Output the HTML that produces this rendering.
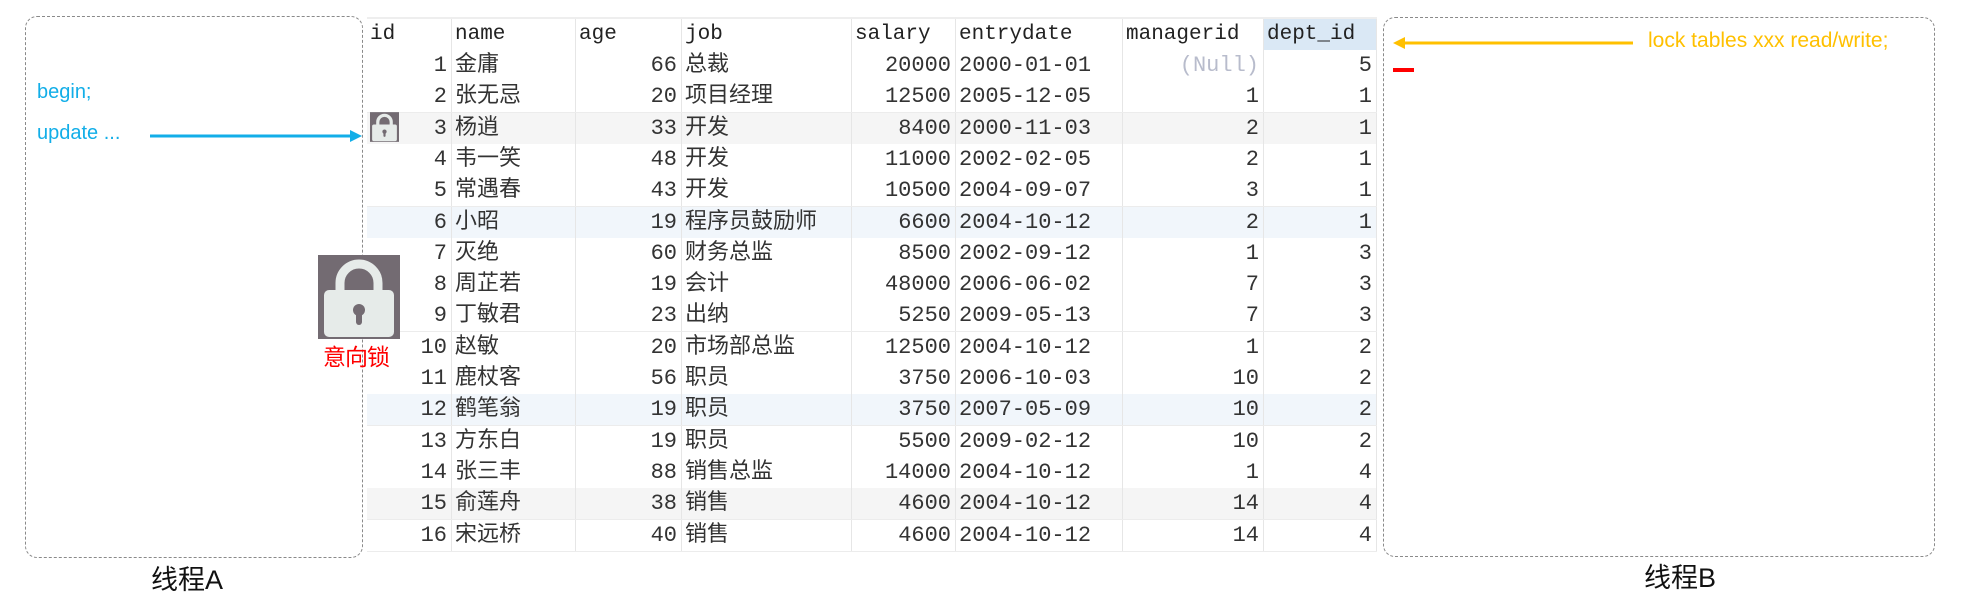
<!DOCTYPE html>
<html><head><meta charset="utf-8"><style>
body{margin:0;width:1971px;height:612px;background:#fff;position:relative;overflow:hidden;font-family:"Liberation Sans","Noto Sans CJK SC",sans-serif}
.abs{position:absolute}
.box{position:absolute;border:1.5px dashed #8a8a8a;border-radius:12px}
.tbl{position:absolute;left:367px;top:17px;width:1010px;height:533px;background:#fff;border-top:2px solid #eee}
.row{position:absolute;left:0;width:1010px;height:31px;border-bottom:1px solid #ececec}
.c{position:absolute;top:0;height:31px;line-height:31px;font-family:"Liberation Mono","Noto Sans CJK SC",monospace;font-size:22px;color:#333;white-space:nowrap;box-sizing:border-box;border-right:1px solid #e6e6e6}
.r{text-align:right;padding-right:4px}
.l{text-align:left;padding-left:3px}
.h .c{color:#222;font-size:21px}
</style></head><body>

<div class="box" style="left:25px;top:16px;width:336px;height:540px"></div>
<div class="box" style="left:1383px;top:17px;width:550px;height:538px"></div>

<div class="abs" style="left:37px;top:81px;color:#12aee8;font-size:20px">begin;</div>
<div class="abs" style="left:37px;top:122px;color:#12aee8;font-size:20px">update ...</div>
<svg class="abs" style="left:148px;top:128px" width="216" height="16"><line x1="2" y1="8" x2="204" y2="8" stroke="#12aee8" stroke-width="3"/><polygon points="202,2 214,8 202,14" fill="#12aee8"/></svg>

<div class="abs" style="left:1648px;top:29px;color:#ffc000;font-size:21px">lock tables xxx read/write;</div>
<svg class="abs" style="left:1393px;top:35px" width="242" height="16"><line x1="10" y1="8" x2="240" y2="8" stroke="#ffc000" stroke-width="3"/><polygon points="12,2 0,8 12,14" fill="#ffc000"/></svg>
<div class="abs" style="left:1393px;top:68px;width:21px;height:4px;background:#f00"></div>

<div class="abs" style="left:151px;top:558px;font-size:27px;color:#111">线程A</div>
<div class="abs" style="left:1644px;top:556px;font-size:27px;color:#111">线程B</div>

<div class="tbl" id="t"></div>

<svg class="abs" style="left:318px;top:255px" width="82" height="84" viewBox="0 0 82 84"><rect width="82" height="84" fill="#736b72"/><path d="M22 38 V28 A19 19 0 0 1 60 28 V38" fill="none" stroke="#e6ebe9" stroke-width="9"/><rect x="6" y="35" width="70" height="47" rx="5" fill="#e6ebe9"/><circle cx="41" cy="55" r="6" fill="#736b72"/><rect x="38" y="55" width="6" height="15" rx="3" fill="#736b72"/></svg>
<div class="abs" style="left:323px;top:338px;font-size:23px;color:#f00;letter-spacing:-1px">意向锁</div>

<script>
var cols=[[0,85,'r'],[85,124,'l'],[209,106,'r'],[315,170,'l'],[485,104,'r'],[589,167,'l'],[756,141,'r'],[897,113,'r']];
var head=['id','name','age','job','salary','entrydate','managerid','dept_id'];
var d=[
[1,'金庸',66,'总裁',20000,'2000-01-01',null,5],
[2,'张无忌',20,'项目经理',12500,'2005-12-05',1,1],
[3,'杨逍',33,'开发',8400,'2000-11-03',2,1],
[4,'韦一笑',48,'开发',11000,'2002-02-05',2,1],
[5,'常遇春',43,'开发',10500,'2004-09-07',3,1],
[6,'小昭',19,'程序员鼓励师',6600,'2004-10-12',2,1],
[7,'灭绝',60,'财务总监',8500,'2002-09-12',1,3],
[8,'周芷若',19,'会计',48000,'2006-06-02',7,3],
[9,'丁敏君',23,'出纳',5250,'2009-05-13',7,3],
[10,'赵敏',20,'市场部总监',12500,'2004-10-12',1,2],
[11,'鹿杖客',56,'职员',3750,'2006-10-03',10,2],
[12,'鹤笔翁',19,'职员',3750,'2007-05-09',10,2],
[13,'方东白',19,'职员',5500,'2009-02-12',10,2],
[14,'张三丰',88,'销售总监',14000,'2004-10-12',1,4],
[15,'俞莲舟',38,'销售',4600,'2004-10-12',14,4],
[16,'宋远桥',40,'销售',4600,'2004-10-12',14,4]];
var bg={3:'#f5f5f5',6:'#f1f6fb',12:'#f1f6fb',15:'#f5f5f5'};
var h='<div class="row h" style="top:0;border-bottom:2px solid #e3e3e3">';
head.forEach(function(t,i){var c=cols[i];h+='<div class="c l" style="left:'+c[0]+'px;width:'+c[1]+'px;'+(i==7?'background:#dae8f5':'')+'">'+t+'</div>';});
h+='</div>';
d.forEach(function(r,j){var top=31+j*31.3;h+='<div class="row" style="top:'+top+'px;background:'+(bg[r[0]]||'#fff')+'">';
r.forEach(function(v,i){var c=cols[i];var txt=v===null?'<span style="color:#b8bccc">(Null)</span>':v;h+='<div class="c '+c[2]+'" style="left:'+c[0]+'px;width:'+c[1]+'px">'+txt+'</div>';});
h+='</div>';});
document.getElementById('t').innerHTML=h;
</script>
<svg class="abs" style="left:370px;top:112px" width="29" height="30" viewBox="0 0 82 84"><rect width="82" height="84" fill="#736b72"/><path d="M22 38 V28 A19 19 0 0 1 60 28 V38" fill="none" stroke="#e6ebe9" stroke-width="9"/><rect x="6" y="35" width="70" height="47" rx="5" fill="#e6ebe9"/><circle cx="41" cy="55" r="6" fill="#736b72"/><rect x="38" y="55" width="6" height="15" rx="3" fill="#736b72"/></svg>
</body></html>
